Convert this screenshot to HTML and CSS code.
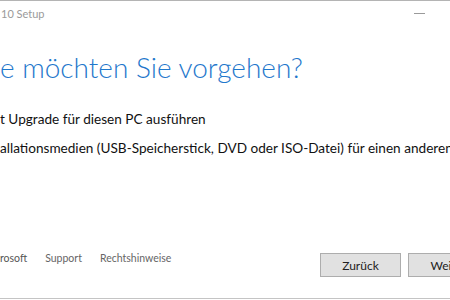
FILE: index.html
```html
<!DOCTYPE html>
<html lang="de">
<head>
  <meta charset="UTF-8">
  <meta name="viewport" content="width=device-width, initial-scale=1.0">
  <title>Windows 10 Setup</title>
  <link rel="stylesheet" href="styles.css">
</head>
<body>
  <div class="window">
    <div class="titlebar">
      <span class="title">10 Setup</span>
      <span class="minimize"><span class="dash"></span></span>
    </div>

    <h1>e möchten Sie vorgehen?</h1>
    <div class="options">
      <p class="option">t Upgrade für diesen PC ausführen</p>
      <p class="option">allationsmedien (USB-Speicherstick, DVD oder ISO-Datei) für einen anderen PC</p>
    </div>

    <div class="footer">
      <div class="links">
        <span class="brand">rosoft</span>
        <a href="#">Support</a>
        <a href="#">Rechtshinweise</a>
      </div>
      <div class="buttons">
        <button type="button">Zurück</button>
        <button type="button">Weiter</button>
      </div>
    </div>
  </div>
</body>
</html>
```

FILE: styles.css
```css
body {
  margin: 0;
  padding: 0;
  background-color: #ffffff;
  font-family: Lato, "Open Sans", sans-serif;
  overflow: hidden;
  width: 450px;
  height: 300px;
}
.window {
  box-sizing: border-box;
  width: 520px;
  height: 299px;
  border-top: 1px solid #b4b4b4;
  border-bottom: 1px solid #c4c4c4;
  display: flex;
  flex-direction: column;
  white-space: nowrap;
}
.titlebar {
  display: flex;
  justify-content: space-between;
  height: 29px;
}
.title {
  padding: 6px 0 0 1px;
  font-size: 11px;
  line-height: 14px;
  color: #9a9a9a;
}
.minimize {
  width: 46px;
  height: 25px;
  margin-right: 78px;
  display: flex;
  align-items: center;
  justify-content: center;
}
.dash {
  width: 11px;
  height: 1px;
  background-color: #9a9a9a;
}
h1 {
  margin: 20px 0 0 0;
  font-size: 28px;
  line-height: 34px;
  font-weight: 300;
  color: #1f78cc;
}
.options {
  display: flex;
  flex-direction: column;
  gap: 11px;
  margin-top: 26px;
}
.option {
  margin: 0;
  font-size: 13.6px;
  line-height: 18px;
  color: #111;
}
.footer {
  display: flex;
  justify-content: space-between;
  align-items: flex-start;
  margin-top: auto;
  margin-bottom: 21px;
}
.links {
  display: flex;
  gap: 18px;
  margin-top: -1px;
  font-size: 10.5px;
  line-height: 13px;
  color: #666;
}
.brand {
  color: #555;
}
.links a {
  color: #666;
  text-decoration: none;
}
.buttons {
  display: flex;
  gap: 7px;
  margin-right: 31px;
}
.buttons button {
  width: 81px;
  height: 24px;
  font-family: inherit;
  font-size: 12px;
  color: #222;
  background-color: #e1e1e1;
  border: 1px solid #adadad;
  padding: 0;
}
```
